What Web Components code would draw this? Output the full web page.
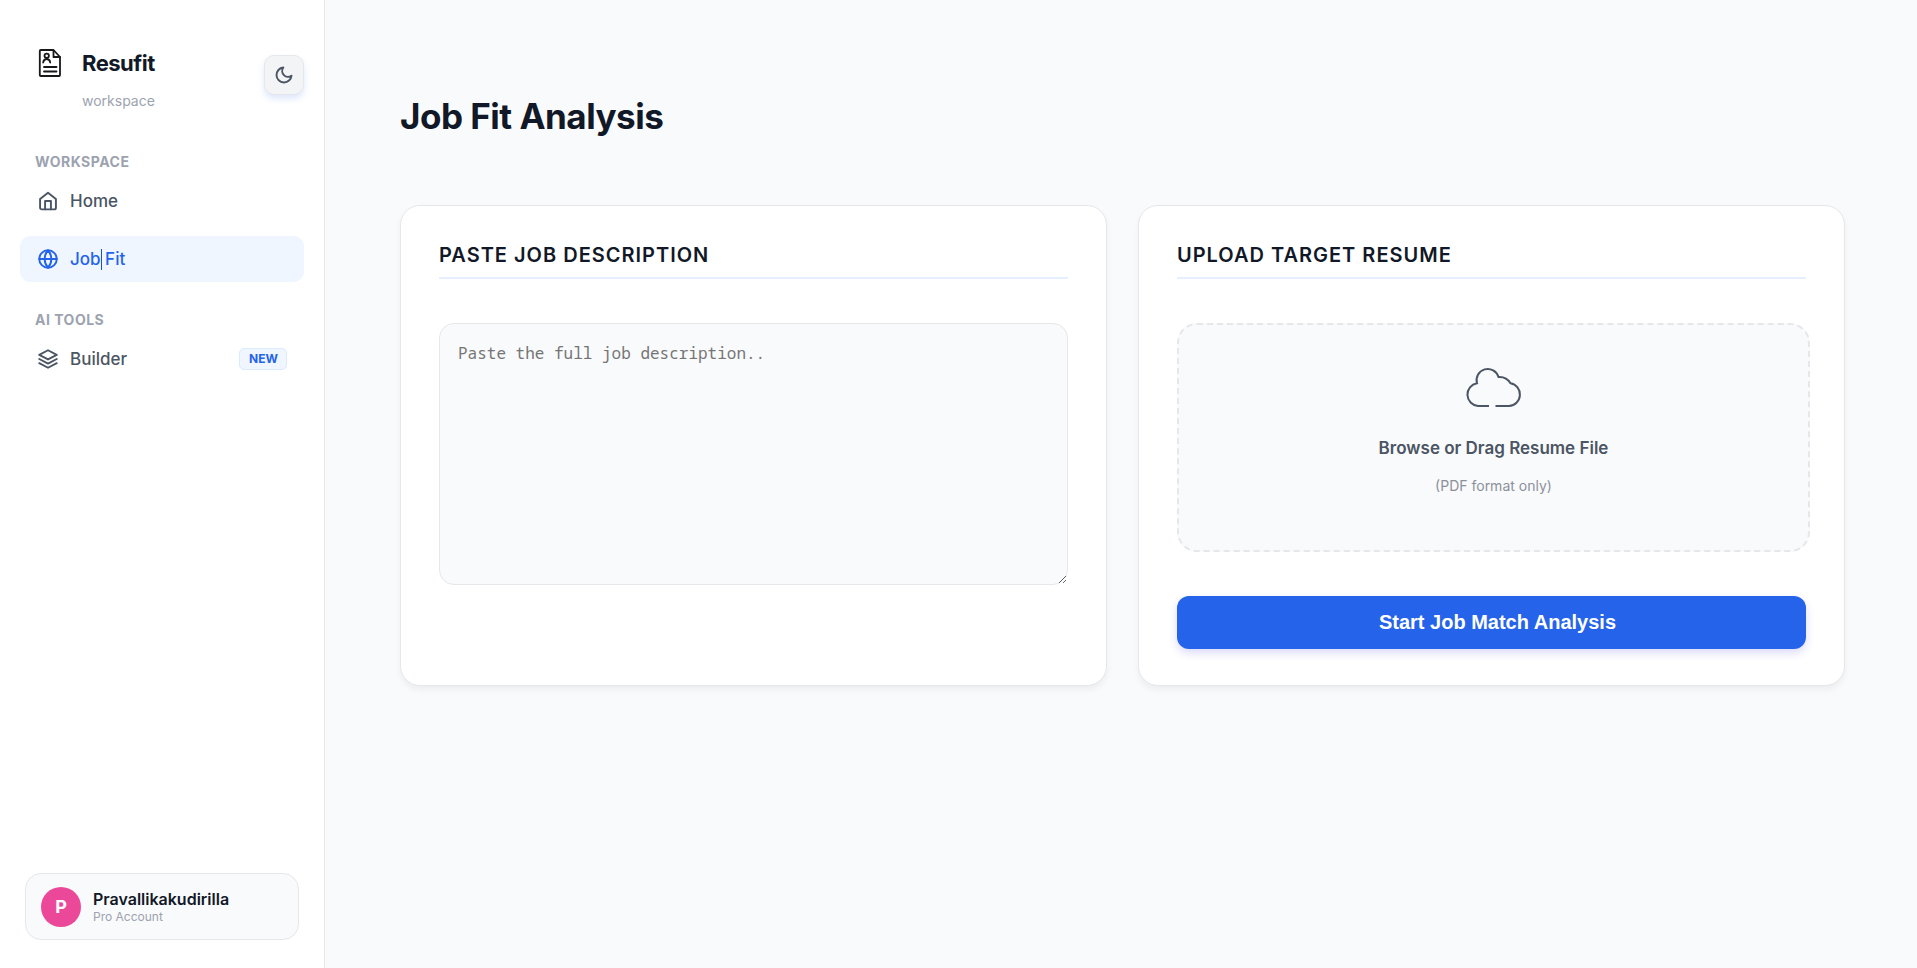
<!DOCTYPE html>
<html lang="en">
<head>
<meta charset="utf-8">
<title>Resufit - Job Fit Analysis</title>
<style>
    body {
        margin: 0;
        background: #f9fafb;
        color: #111827;
        font-family: Inter, "Liberation Sans", sans-serif;
    }
</style>
</head>
<body>

<template id="app_shell_tpl">
  <style>
      :host {
          display: flex;
          min-height: 100vh;
      }
      main {
          flex: 1;
          min-width: 0;
          padding: 93px 72px 48px 75px;
      }
      h1 {
          margin: 0 0 66px;
          font-size: 35px;
          font-weight: 700;
          line-height: 46px;
          letter-spacing: -0.5px;
      }
      .cards {
          display: grid;
          grid-template-columns: 1fr 1fr;
          gap: 31px;
      }
  </style>
  <slot name="sidebar"></slot>
  <main>
    <h1><slot name="title"></slot></h1>
    <div class="cards"><slot></slot></div>
  </main>
</template>

<template id="side_bar_tpl">
  <style>
      :host {
          display: flex;
          flex-direction: column;
          box-sizing: border-box;
          width: 325px;
          flex: none;
          padding: 47px 20px 28px;
          background: #ffffff;
          border-right: 1px solid #e5e7eb;
      }
      header {
          display: flex;
          justify-content: space-between;
          align-items: flex-start;
          height: 65px;
          padding-left: 16px;
      }
      .bottom {
          margin-top: auto;
          padding: 0 5px;
      }
  </style>
  <header>
    <slot name="brand"></slot>
    <slot name="toggle"></slot>
  </header>
  <slot></slot>
  <div class="bottom"><slot name="profile"></slot></div>
</template>

<template id="brand_logo_tpl">
  <style>
      :host {
          display: grid;
          grid-template-columns: 46px auto;
      }
      svg {
          width: 28px;
          height: 34px;
      }
      strong {
          font-size: 22px;
          font-weight: 700;
          line-height: 32px;
          letter-spacing: -0.5px;
      }
      small {
          grid-column: 2;
          margin-top: 10px;
          color: #9ca3af;
          font-size: 14px;
          line-height: 20px;
      }
  </style>
  <svg viewBox="0 0 28 34" fill="none" stroke="#18181b" stroke-width="1.8" stroke-linejoin="round" stroke-linecap="round">
    <path d="M4.800 3h12.700l6.500 7v18q0 1-1 1H4.800q-1 0-1-1V4q0-1 1-1z"/>
    <path d="M17.500 3.500v6.500h6.500"/>
    <circle cx="10.700" cy="8.800" r="2.200"/>
    <path d="M7.200 15.500q.3-3.400 3.500-3.400t3.500 3.400M8 20h12.500M8 24.500h12.500"/>
  </svg>
  <strong><slot></slot></strong>
  <small><slot name="sub"></slot></small>
</template>

<template id="theme_toggle_tpl">
  <style>
      :host {
          display: block;
          margin-top: 8px;
      }
      button {
          display: flex;
          align-items: center;
          justify-content: center;
          width: 40px;
          height: 40px;
          padding: 0;
          color: #4b5563;
          background: #f3f4f6;
          border: 1px solid #e5e7eb;
          border-radius: 10px;
          box-shadow: 0 4px 6px rgba(37, 99, 235, 0.15);
      }
  </style>
  <button type="button" aria-label="Toggle theme">
    <svg width="20" height="20" viewBox="0 0 24 24" fill="none" stroke="currentColor" stroke-width="2.300" stroke-linecap="round" stroke-linejoin="round">
      <path d="M21 12.790A9 9 0 1 1 11.210 3 7 7 0 0 0 21 12.790z"/>
    </svg>
  </button>
</template>

<template id="nav_section_tpl">
  <style>
      :host {
          display: block;
          margin-top: 28px;
      }
      :host(:first-of-type) { margin-top: 40px; }
      h2 {
          margin: 0 0 6px;
          padding: 0 15px;
          color: #9ca3af;
          font-size: 14px;
          font-weight: 700;
          line-height: 20px;
          letter-spacing: 0.5px;
      }
      nav {
          display: flex;
          flex-direction: column;
          gap: 12px;
      }
  </style>
  <h2></h2>
  <nav><slot></slot></nav>
</template>

<template id="nav_item_tpl">
  <style>
      :host {
          display: block;
      }
      a {
          display: flex;
          align-items: center;
          height: 46px;
          padding: 0 17px 0 18px;
          border-radius: 10px;
          color: #4b5563;
          font-size: 17px;
          font-weight: 500;
          line-height: 24px;
          text-decoration: none;
      }
      :host([active]) a {
          color: #2563eb;
          background: #eff6ff;
      }
      svg {
          width: 20px;
          height: 20px;
          margin-right: 12px;
      }
      .badge {
          margin-left: auto;
          padding: 0 8px 0 9px;
          color: #2563eb;
          background: #eff6ff;
          border: 1px solid #dbeafe;
          border-radius: 5px;
          font-size: 12px;
          font-weight: 700;
          line-height: 20px;
      }
      .badge:empty { display: none; }
  </style>
  <a href="#">
    <svg viewBox="0 0 24 24" fill="none" stroke="currentColor" stroke-width="2.300" stroke-linecap="round" stroke-linejoin="round"></svg>
    <span><slot></slot></span>
    <span class="badge"></span>
  </a>
</template>

<template id="text_caret_tpl">
  <style>
      :host {
          position: relative;
      }
      i {
          position: absolute;
          left: 0;
          top: 0;
          width: 1px;
          height: 21px;
          background: #1d4ed8;
      }
  </style>
  <i></i>
</template>

<template id="user_card_tpl">
  <style>
      :host {
          display: flex;
          align-items: center;
          gap: 12px;
          padding: 13px 15px 12px;
          background: #f9fafb;
          border: 1px solid #e5e7eb;
          border-radius: 16px;
      }
      .avatar {
          width: 40px;
          height: 40px;
          border-radius: 50%;
          background: #ec4899;
          color: #ffffff;
          font-size: 18px;
          font-weight: 700;
          line-height: 40px;
          text-align: center;
      }
      .name {
          font-size: 16px;
          font-weight: 600;
          line-height: 19px;
      }
      .plan {
          color: #9ca3af;
          font-size: 12px;
          line-height: 16px;
      }
  </style>
  <div class="avatar"></div>
  <div>
    <div class="name"><slot></slot></div>
    <div class="plan"><slot name="plan"></slot></div>
  </div>
</template>

<template id="panel_card_tpl">
  <style>
      :host {
          display: block;
          padding: 36px 38px;
          background: #ffffff;
          border: 1px solid #e5e7eb;
          border-radius: 20px;
          box-shadow: 0 4px 6px rgba(0, 0, 0, 0.05);
      }
      h2 {
          margin: 0 0 44px;
          padding-bottom: 9px;
          border-bottom: 2px solid #e6effd;
          font-size: 20px;
          font-weight: 600;
          line-height: 26px;
          letter-spacing: 1px;
      }
  </style>
  <h2 id="heading"></h2>
  <slot></slot>
</template>

<template id="job_description_tpl">
  <style>
      :host { display: block; }
      textarea {
          display: block;
          box-sizing: border-box;
          width: 100%;
          height: 262px;
          padding: 18px;
          color: #111827;
          background: #f9fafb;
          border: 1px solid #e5e7eb;
          border-radius: 15px;
          font-family: "Noto Sans Mono", "DejaVu Sans Mono", monospace;
          font-size: 16px;
          line-height: 22px;
          resize: vertical;
      }
      textarea::placeholder { color: #757575; }
  </style>
  <textarea aria-label="Job description" placeholder="Paste the full job description.."></textarea>
</template>

<template id="resume_upload_tpl">
  <style>
      :host { display: block; }
      label {
          display: flex;
          flex-direction: column;
          align-items: center;
          width: 100%;
          padding: 35px 0 54px;
          background: #f9fafb;
          border: 2px dashed #e5e7eb;
          border-radius: 20px;
          text-align: center;
      }
      input {
          position: absolute;
          width: 1px;
          height: 1px;
          opacity: 0;
      }
      svg {
          width: 58px;
          height: 58px;
          color: #4b5563;
      }
      .main {
          margin-top: 18px;
          color: #4b5563;
          font-size: 17px;
          font-weight: 600;
          line-height: 24px;
      }
      .hint {
          margin-top: 16px;
          color: #8b919c;
          font-size: 14px;
          line-height: 20px;
      }
  </style>
  <label>
    <input type="file" accept="application/pdf">
    <svg viewBox="0 0 58 58" fill="none" stroke="currentColor" stroke-width="2">
      <path d="M24 46H13A11.500 11.500 0 0 1 12 23.200A11 11 0 0 1 33.500 17A13 13 0 0 1 45.500 23.200A11.500 11.500 0 0 1 44 46H30.500"/>
    </svg>
    <span class="main"><slot></slot></span>
    <span class="hint"><slot name="hint"></slot></span>
  </label>
</template>

<template id="primary_button_tpl">
  <style>
      :host {
          display: block;
          margin-top: 44px;
      }
      button {
          display: block;
          width: 100%;
          height: 53px;
          padding: 0 0 0 12px;
          color: #ffffff;
          background: #2563eb;
          border: 0;
          border-radius: 12px;
          box-shadow: 0 4px 8px rgba(79, 70, 229, 0.2);
          font-family: "Liberation Sans", Arial, sans-serif;
          font-size: 20px;
          font-weight: 700;
      }
  </style>
  <button type="button"><slot></slot></button>
</template>

<app-shell>
  <side-bar slot="sidebar">
    <brand-logo slot="brand">Resufit<span slot="sub">workspace</span></brand-logo>
    <theme-toggle slot="toggle"></theme-toggle>
    <nav-section heading="WORKSPACE">
      <nav-item icon="home">Home</nav-item>
      <nav-item icon="globe" active>Job<text-caret></text-caret> Fit</nav-item>
    </nav-section>
    <nav-section heading="AI TOOLS">
      <nav-item icon="layers" badge="NEW">Builder</nav-item>
    </nav-section>
    <user-card slot="profile" initial="P">Pravallikakudirilla<span slot="plan">Pro Account</span></user-card>
  </side-bar>
  <span slot="title">Job Fit Analysis</span>
  <panel-card heading="PASTE JOB DESCRIPTION">
    <job-description></job-description>
  </panel-card>
  <panel-card heading="UPLOAD TARGET RESUME">
    <resume-upload>Browse or Drag Resume File<span slot="hint">(PDF format only)</span></resume-upload>
    <primary-button>Start Job Match Analysis</primary-button>
  </panel-card>
</app-shell>

<script type="module">
    const ICONS = {
        home: '<path d="M2.500 9.500 12 2l9.500 7.500V20a2 2 0 0 1-2 2h-15a2 2 0 0 1-2-2z"/><path d="M8.500 22V12h7v10"/>',
        globe: '<circle cx="12" cy="12" r="10.500"/><path d="M1.500 12h21M12 1.500a16 16 0 0 1 4 10.500 16 16 0 0 1-4 10.500 16 16 0 0 1-4-10.500 16 16 0 0 1 4-10.500z"/>',
        layers: '<path d="M12 1.500 1.500 7 12 12.500 22.500 7zM1.500 17 12 22.500 22.500 17M1.500 12 12 17.500 22.500 12"/>'
    };

    class TemplateElement extends HTMLElement {
        constructor() {
            super();
            this.attachShadow({ mode: 'open' });
            const tpl = document.getElementById(`${this.localName.replace(/-/g, '_')}_tpl`);
            this.shadowRoot.appendChild(tpl.content.cloneNode(true));
        }
    }

    class AppShell extends TemplateElement {}
    class SideBar extends TemplateElement {}
    class BrandLogo extends TemplateElement {}
    class TextCaret extends TemplateElement {}
    class JobDescription extends TemplateElement {}
    class ResumeUpload extends TemplateElement {}
    class PrimaryButton extends TemplateElement {}
    class ThemeToggle extends TemplateElement {}

    class HeadingElement extends TemplateElement {
        connectedCallback() {
            this.shadowRoot.querySelector('h2').textContent = this.getAttribute('heading') ?? '';
        }
    }
    class NavSection extends HeadingElement {}
    class PanelCard extends HeadingElement {}

    class NavItem extends TemplateElement {
        connectedCallback() {
            this.shadowRoot.querySelector('svg').innerHTML = ICONS[this.getAttribute('icon')] ?? '';
            this.shadowRoot.querySelector('.badge').textContent = this.getAttribute('badge') ?? '';
            if (this.hasAttribute('active')) {
                this.shadowRoot.querySelector('a').setAttribute('aria-current', 'page');
            }
        }
    }

    class UserCard extends TemplateElement {
        connectedCallback() {
            this.shadowRoot.querySelector('.avatar').textContent = this.getAttribute('initial') ?? '';
        }
    }

    customElements.define('app-shell', AppShell);
    customElements.define('side-bar', SideBar);
    customElements.define('brand-logo', BrandLogo);
    customElements.define('theme-toggle', ThemeToggle);
    customElements.define('nav-section', NavSection);
    customElements.define('nav-item', NavItem);
    customElements.define('text-caret', TextCaret);
    customElements.define('user-card', UserCard);
    customElements.define('panel-card', PanelCard);
    customElements.define('job-description', JobDescription);
    customElements.define('resume-upload', ResumeUpload);
    customElements.define('primary-button', PrimaryButton);
</script>
</body>
</html>
